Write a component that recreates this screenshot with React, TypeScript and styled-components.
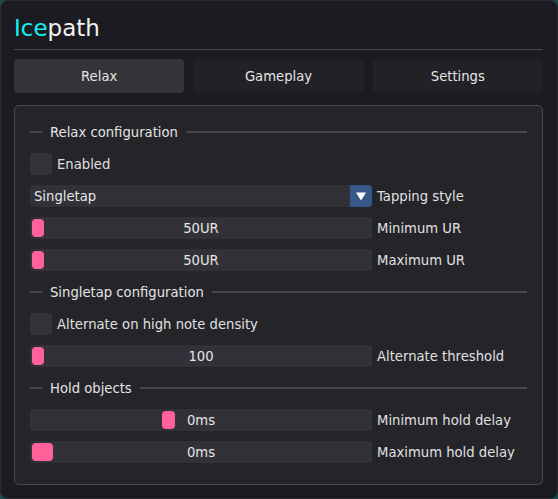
import React, { FC } from 'react';
import styled, { createGlobalStyle } from 'styled-components';

const GlobalStyle = createGlobalStyle`
  html, body {
    margin: 0;
    padding: 0;
    background: #1b4a4b;
  }
  body {
    font-family: 'DejaVu Sans', Verdana, sans-serif;
    font-size: 13.2px;
    color: #e2e2e4;
  }
`;

const Window = styled.div`
  box-sizing: border-box;
  width: 558px;
  height: 499px;
  display: flex;
  flex-direction: column;
  padding: 14px 14px 13px 13px;
  background: #1c1b21;
  border: 1px solid #2a2930;
  border-radius: 8px;
`;

const Title = styled.h1`
  margin: 0;
  font-size: 23px;
  font-weight: normal;
  line-height: 26px;
  color: #f2f2f2;
`;

const Accent = styled.span`
  color: #14f0f0;
`;

const Separator = styled.div`
  height: 1px;
  margin-top: 8px;
  background: #4a4950;
`;

const TabBar = styled.div`
  display: grid;
  grid-template-columns: repeat(3, 1fr);
  gap: 9px;
  margin-top: 9px;
`;

const Tab = styled.div<{ $active?: boolean }>`
  height: 34px;
  display: flex;
  align-items: center;
  justify-content: center;
  border-radius: 4px;
  background: ${(p) => (p.$active ? '#343338' : '#222126')};
  color: #e4e4e4;
`;

const Panel = styled.div`
  flex: 1;
  margin-top: 12px;
  display: flex;
  flex-direction: column;
  gap: 10px;
  padding: 15px 15px 0 15px;
  background: #252429;
  border: 1px solid #4a4950;
  border-radius: 5px;
`;

const SectionHeader = styled.div`
  height: 22px;
  display: flex;
  align-items: center;
  gap: 8px;
  color: #e4e4e6;

  &::before,
  &::after {
    content: '';
    height: 2px;
    background: #47464e;
  }
  &::before {
    width: 12px;
  }
  &::after {
    flex: 1;
  }
`;

const Row = styled.div`
  height: 22px;
  display: flex;
  align-items: center;
  gap: 5px;
`;

const Field = styled.div`
  position: relative;
  width: 342px;
  height: 22px;
  flex: none;
`;

const Label = styled.span`
  color: #e0e0e2;
  white-space: nowrap;
`;

const CheckBox = styled.div`
  width: 22px;
  height: 22px;
  border-radius: 4px;
  background: #333237;
`;

const ComboBox = styled(Field)`
  display: flex;
  background: #323137;
  border-radius: 4px;
`;

const ComboValue = styled.div`
  flex: 1;
  display: flex;
  align-items: center;
  padding-left: 4px;
  color: #e6e6e6;
`;

const ComboArrow = styled.div`
  width: 22px;
  display: flex;
  align-items: center;
  justify-content: center;
  background: #365888;
  border-radius: 0 4px 4px 0;
`;

const SliderTrack = styled(Field)`
  display: flex;
  align-items: center;
  justify-content: center;
  background: #323137;
  border-radius: 4px;
  color: #e6e6e6;
`;

const SliderGrab = styled.div<{ $width: number }>`
  position: absolute;
  top: 2px;
  bottom: 2px;
  width: ${(p) => p.$width}px;
  border-radius: 4px;
  background: #ff6199;
`;

const SliderValue = styled.span`
  position: relative;
`;

type SliderProps = { value: string; label: string; pos: number; grab?: number };

const Slider: FC<SliderProps> = ({ value, label, pos, grab = 12 }) => (
  <Row>
    <SliderTrack>
      <SliderGrab $width={grab} style={{ left: 2 + pos }} />
      <SliderValue>{value}</SliderValue>
    </SliderTrack>
    <Label>{label}</Label>
  </Row>
);

const Check: FC<{ label: string }> = ({ label }) => (
  <Row>
    <CheckBox />
    <Label>{label}</Label>
  </Row>
);

const App: FC = () => (
  <>
    <GlobalStyle />
    <Window>
      <Title>
        <Accent>Ice</Accent>path
      </Title>
      <Separator />
      <TabBar>
        <Tab $active>Relax</Tab>
        <Tab>Gameplay</Tab>
        <Tab>Settings</Tab>
      </TabBar>
      <Panel>
        <SectionHeader>Relax configuration</SectionHeader>
        <Check label="Enabled" />
        <Row>
          <ComboBox>
            <ComboValue>Singletap</ComboValue>
            <ComboArrow>
              <svg width="10" height="9" viewBox="0 0 10 9">
                <path d="M0 0.5 H10 L5 8.5 Z" fill="#ffffff" />
              </svg>
            </ComboArrow>
          </ComboBox>
          <Label>Tapping style</Label>
        </Row>
        <Slider value="50UR" label="Minimum UR" pos={0} />
        <Slider value="50UR" label="Maximum UR" pos={0} />
        <SectionHeader>Singletap configuration</SectionHeader>
        <Check label="Alternate on high note density" />
        <Slider value="100" label="Alternate threshold" pos={0} />
        <SectionHeader>Hold objects</SectionHeader>
        <Slider value="0ms" label="Minimum hold delay" pos={130} grab={13} />
        <Slider value="0ms" label="Maximum hold delay" pos={0} grab={21} />
      </Panel>
    </Window>
  </>
);

export default App;
